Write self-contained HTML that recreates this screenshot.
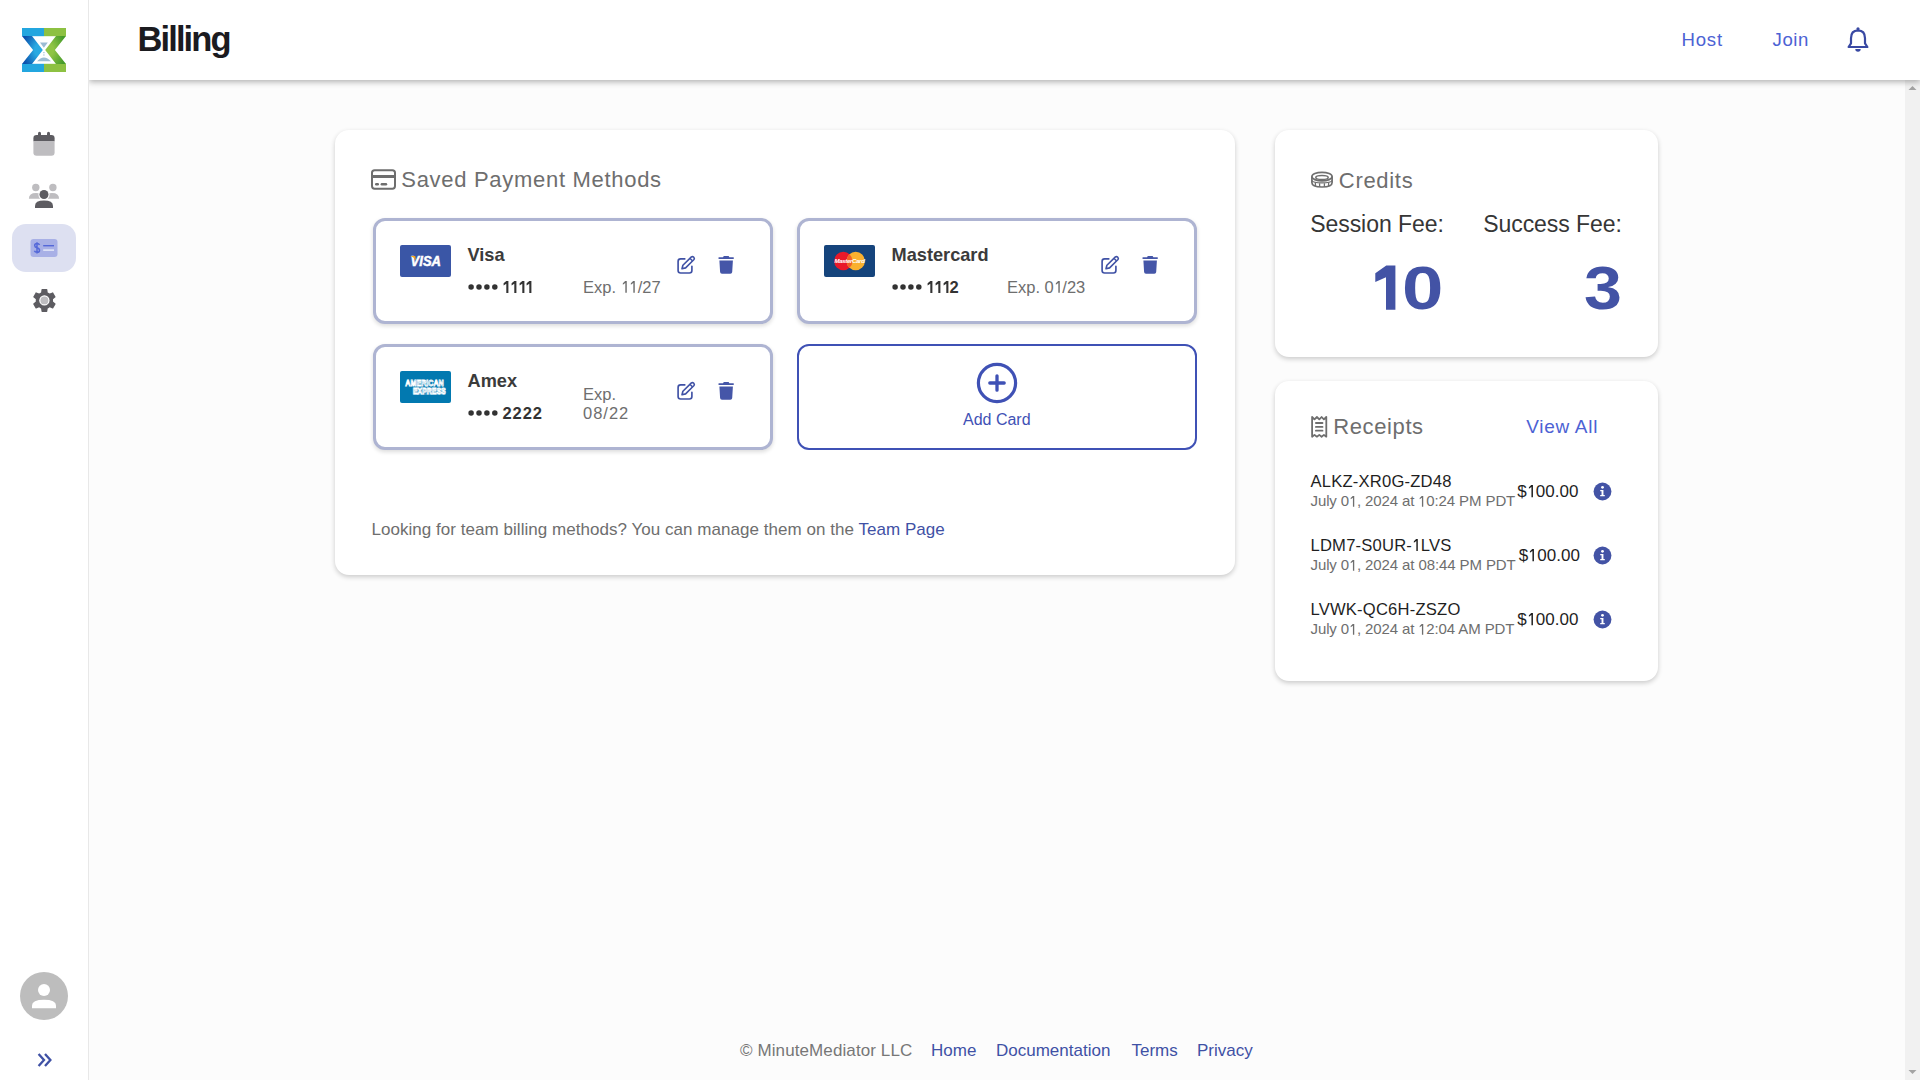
<!DOCTYPE html>
<html><head><meta charset="utf-8">
<style>
*{margin:0;padding:0;box-sizing:border-box}
html,body{width:1920px;height:1080px;overflow:hidden;background:#fcfcfc;font-family:"Liberation Sans",sans-serif}
.a{position:absolute;white-space:nowrap;line-height:1}
#side{position:absolute;left:0;top:0;width:89px;height:1080px;background:#fff;border-right:1px solid #e8e8e8}
#head{position:absolute;left:89px;top:0;width:1831px;height:80px;background:#fff;box-shadow:0 2px 6px rgba(0,0,0,.3);clip-path:inset(0 0 -30px 0);z-index:2}
#sb{position:absolute;left:1905px;top:80px;width:15px;height:1000px;background:#f1f1f1}
.card{position:absolute;background:#fff;border-radius:14px;box-shadow:0 2px 5px rgba(0,0,0,.2)}
.o1{display:inline-block;position:relative;width:.52em;height:.716em;vertical-align:baseline}
.o1 svg{position:absolute;left:0;top:0;width:100%;height:100%;overflow:visible}
.pm{position:absolute;width:400px;height:106px;border:3px solid #aeb4d2;border-radius:12px;background:#fff;box-shadow:0 2px 4px rgba(0,0,0,.14)}
</style></head><body>
<div id="side">
<svg class="a" style="left:22px;top:28px" width="44" height="44" viewBox="0 0 44 44">
<defs>
<radialGradient id="gb" cx="0.8" cy="0.5" r="0.8"><stop offset="0.25" stop-color="#29a9e1"/><stop offset="1" stop-color="#0a4fab"/></radialGradient>
<radialGradient id="gg" cx="0.2" cy="0.5" r="0.8"><stop offset="0.25" stop-color="#8fc445"/><stop offset="1" stop-color="#459b2a"/></radialGradient>
</defs>
<rect x="0" y="0" width="22" height="8.2" fill="#23a6df"/><rect x="22" y="0" width="22" height="8.2" fill="#8dc142"/>
<rect x="0" y="35.8" width="22" height="8.2" fill="#23a6df"/><rect x="22" y="35.8" width="22" height="8.2" fill="#8dc142"/>
<polygon points="0,8 10,8 20.8,22 10,36 0,36 11.1,22" fill="url(#gb)"/>
<polygon points="44,8 34,8 23.2,22 34,36 44,36 32.9,22" fill="url(#gg)"/>
<polygon points="18,14.6 25.8,14.6 21.9,19.8" fill="#9bbcd3"/>
<path d="M15 33.3 Q21.9 25.6 29 33.3 Z" fill="#9bbcd3"/>
<rect x="21.3" y="24" width="1.2" height="1.2" fill="#9bbcd3"/><rect x="21.3" y="26.4" width="1.2" height="1.2" fill="#9bbcd3"/>
</svg>
<svg class="a" style="left:33px;top:131px" width="22" height="26" viewBox="0 0 22 26">
<rect x="5" y="0.8" width="3" height="6" rx="1.5" fill="#5d5c61"/><rect x="14" y="0.8" width="3" height="6" rx="1.5" fill="#5d5c61"/>
<path d="M0.4 7.2 Q0.4 4 3.6 4 H18.4 Q21.6 4 21.6 7.2 V10.2 H0.4 Z" fill="#5d5c61"/>
<path d="M0.4 10.1 H21.6 V21.6 Q21.6 24.8 18.4 24.8 H3.6 Q0.4 24.8 0.4 21.6 Z" fill="#bebdc0"/>
</svg>
<svg class="a" style="left:28px;top:182px" width="32" height="28" viewBox="0 0 32 28">
<circle cx="7.8" cy="5.5" r="3.7" fill="#bebdc0"/><circle cx="24.9" cy="5.5" r="3.7" fill="#bebdc0"/>
<path d="M0.9 16.8 Q0.9 11 8 11 Q11 11 12.5 12 Q11.2 14 12 16.8 Z" fill="#bebdc0"/>
<path d="M31.1 16.8 Q31.1 11 24 11 Q21 11 19.5 12 Q20.8 14 20 16.8 Z" fill="#bebdc0"/>
<circle cx="16" cy="12.5" r="5.6" fill="#fff"/>
<circle cx="16" cy="12.5" r="4.5" fill="#5d5c61"/>
<path d="M7 26 V24 Q7 18.6 16 18.6 Q25 18.6 25 24 V26 Z" fill="#5d5c61"/>
</svg>
<div class="a" style="left:12px;top:224px;width:64px;height:48px;border-radius:14px;background:#dde0f1"></div>
<svg class="a" style="left:30px;top:239px" width="28" height="18" viewBox="0 0 28 18">
<rect x="0.5" y="0" width="27" height="18" rx="3" fill="#a8b0e6"/>
<path d="M9.5 5.9 Q9 4.5 7 4.5 Q4.7 4.5 4.7 6.6 Q4.7 8.3 7 8.8 Q9.5 9.3 9.5 11.4 Q9.5 13.3 7 13.3 Q4.9 13.3 4.4 11.8 M7 3.2 V14.6" fill="none" stroke="#5468d8" stroke-width="1.5"/>
<rect x="13.2" y="6" width="10.8" height="1.4" fill="#5468d8"/>
<rect x="13.2" y="10.4" width="10.8" height="1.4" fill="#e8ebfa"/>
</svg>
<svg class="a" style="left:29.6px;top:285.5px" width="28.8" height="28.8" viewBox="0 0 24 24">
<path fill="#5d5c61" d="M19.14 12.94c.04-.3.06-.61.06-.94 0-.32-.02-.64-.07-.94l2.03-1.58c.18-.14.23-.41.12-.61l-1.92-3.32c-.12-.22-.37-.29-.59-.22l-2.39.96c-.5-.38-1.03-.7-1.62-.94l-.36-2.54c-.04-.24-.24-.41-.48-.41h-3.84c-.24 0-.43.17-.47.41l-.36 2.54c-.59.24-1.13.57-1.62.94l-2.39-.96c-.22-.08-.47 0-.59.22L2.74 8.87c-.12.21-.08.47.12.61l2.03 1.58c-.05.3-.09.63-.09.94s.02.64.07.94l-2.03 1.58c-.18.14-.23.41-.12.61l1.920 3.32c.12.22.37.29.59.22l2.39-.96c.5.38 1.03.7 1.62.94l.36 2.54c.05.24.24.41.48.41h3.84c.24 0 .44-.17.47-.41l.36-2.54c.59-.24 1.13-.56 1.62-.94l2.39.96c.22.08.47 0 .59-.22l1.92-3.32c.12-.22.07-.47-.12-.61l-2.01-1.58z"/>
<circle cx="12" cy="12" r="4.3" fill="#fff"/><circle cx="12" cy="12" r="3.3" fill="#bebdc0"/>
</svg>
<svg class="a" style="left:20px;top:972px" width="48" height="48" viewBox="0 0 48 48">
<circle cx="24" cy="24" r="24" fill="#bdbdbd"/>
<circle cx="24" cy="18" r="6" fill="#fff"/>
<path d="M12 36.2 V33.5 Q12 27.8 24 27.8 Q36 27.8 36 33.5 V36.2 Z" fill="#fff"/>
</svg>
<svg class="a" style="left:36px;top:1051px" width="18" height="18" viewBox="0 0 18 18">
<path d="M2.6 3 L8 9 L2.6 15 M9 3 L14.4 9 L9 15" fill="none" stroke="#3f51a5" stroke-width="2.3"/>
</svg>
</div>
<div id="head">
<div class="a" style="left:48.5px;top:21.6px;font-size:34.5px;font-weight:bold;letter-spacing:-1.9px;color:#1b1b1f">Billing</div>
<div class="a" style="left:1592.5px;top:30.9px;font-size:18.6px;letter-spacing:0.8px;color:#4c62d4">Host</div>
<div class="a" style="left:1683.5px;top:30.9px;font-size:18.6px;letter-spacing:0.6px;color:#4c62d4">Join</div>
<svg class="a" style="left:1757px;top:26px" width="24" height="27" viewBox="0 0 24 27">
<circle cx="12" cy="2.8" r="1.6" fill="#3949a3"/>
<path d="M2.6 21 L5 17.3 V12.2 Q5 4.6 12 4.4 Q19 4.6 19 12.2 V17.3 L21.4 21 Z" fill="none" stroke="#3949a3" stroke-width="2.2" stroke-linejoin="round"/>
<path d="M9.3 23 H14.7 Q14.7 25.8 12 25.8 Q9.3 25.8 9.3 23 Z" fill="#3949a3"/>
</svg>
</div>
<div id="sb"></div>
<svg class="a" style="left:1905px;top:80px" width="15" height="15"><path d="M3.5 10 L7.5 6 L11.5 10 Z" fill="#a3a3a3"/></svg>
<svg class="a" style="left:1905px;top:1065px" width="15" height="15"><path d="M3.5 5 L7.5 9 L11.5 5 Z" fill="#a3a3a3"/></svg>
<div class="card" style="left:335px;top:130px;width:900px;height:445px"></div>
<svg class="a" style="left:370px;top:168px" width="27" height="23" viewBox="0 0 27 23"><rect x="2" y="2.2" width="23" height="18.5" rx="2.6" fill="none" stroke="#6e6e6e" stroke-width="2"/><rect x="2" y="7" width="23" height="3" fill="#6e6e6e"/><rect x="5" y="15" width="4" height="2.4" rx="1.2" fill="#6e6e6e"/><rect x="10.6" y="15" width="6.6" height="2.4" rx="1.2" fill="#6e6e6e"/></svg>
<div class="a" style="left:401.3px;top:169.4px;font-size:22.0px;color:#6e6e6e;letter-spacing:0.7px">Saved Payment Methods</div>
<div class="pm" style="left:373px;top:218px"></div>
<svg class="a" style="left:400px;top:245px" width="51" height="32" viewBox="0 0 51 32"><rect width="51" height="32" rx="2" fill="#3a56a6"/><text x="10.6" y="21.2" textLength="30.4" lengthAdjust="spacingAndGlyphs" font-family="Liberation Sans" font-size="14" font-weight="bold" font-style="italic" fill="#fff" stroke="#fff" stroke-width="0.5">VISA</text><path d="M10.2 11 L15.2 11 L16 15.6 Q13.8 11.8 10.2 11 Z" fill="#f4a51c"/></svg>
<div class="a" style="left:467.5px;top:246.4px;font-size:18.2px;color:#3b3b3b;font-weight:bold">Visa</div>
<svg class="a" style="left:468.0px;top:283.4px" width="32" height="8" viewBox="0 0 32 8"><circle cx="3.10" cy="4" r="2.75" fill="#333"/><circle cx="11.00" cy="4" r="2.75" fill="#333"/><circle cx="18.90" cy="4" r="2.75" fill="#333"/><circle cx="26.80" cy="4" r="2.75" fill="#333"/></svg>
<svg class="a" style="left:503.4px;top:281.0px" width="7" height="12" viewBox="0 0 7 12"><path d="M3.3 0 H5.4 V12 H3.3 V2.7 L0.6 4.4 V2.3 Z" fill="#333"/></svg>
<svg class="a" style="left:510.9px;top:281.0px" width="7" height="12" viewBox="0 0 7 12"><path d="M3.3 0 H5.4 V12 H3.3 V2.7 L0.6 4.4 V2.3 Z" fill="#333"/></svg>
<svg class="a" style="left:518.5px;top:281.0px" width="7" height="12" viewBox="0 0 7 12"><path d="M3.3 0 H5.4 V12 H3.3 V2.7 L0.6 4.4 V2.3 Z" fill="#333"/></svg>
<svg class="a" style="left:526.0px;top:281.0px" width="7" height="12" viewBox="0 0 7 12"><path d="M3.3 0 H5.4 V12 H3.3 V2.7 L0.6 4.4 V2.3 Z" fill="#333"/></svg>
<div class="a" style="left:583.0px;top:279.0px;font-size:16.5px;color:#6e6e6e;">Exp. <span class="o1"><svg viewBox="0 0 520 716" preserveAspectRatio="none"><path d="M262 0 H350 V716 H262 V118 L112 222 V132 L250 0 Z" fill="currentColor"/></svg></span><span class="o1"><svg viewBox="0 0 520 716" preserveAspectRatio="none"><path d="M262 0 H350 V716 H262 V118 L112 222 V132 L250 0 Z" fill="currentColor"/></svg></span>/27</div>
<svg class="a" style="left:675.0px;top:255.0px" width="21" height="21" viewBox="0 0 21 21"><path d="M9.8 3.9 H5.6 Q3.1 3.9 3.1 6.4 V15.45 Q3.1 17.95 5.6 17.95 H14.4 Q16.9 17.95 16.9 15.45 V11.25" fill="none" stroke="#3f51a5" stroke-width="1.65" stroke-linecap="round"/><path d="M16.4 1.9 Q17.6 1.1 18.8 2.3 Q19.8 3.5 19 4.5 L10.6 12.9 L7 13.8 L7.9 10.2 Z" fill="none" stroke="#3f51a5" stroke-width="1.6" stroke-linejoin="round"/><path d="M15.1 3.4 L17.4 5.7" stroke="#3f51a5" stroke-width="1.4"/></svg>
<svg class="a" style="left:717.0px;top:255.0px" width="18" height="20" viewBox="0 0 18 20"><path d="M6.8 1 H11.6 L12.4 2.2 H16 Q17 2.2 17 3.1 Q17 4 16 4 H2.3 Q1.3 4 1.3 3.1 Q1.3 2.2 2.3 2.2 H6 Z" fill="#4556a8"/><path d="M2.4 5.6 H15.9 L15.2 17 Q15.1 18.8 13.3 18.8 H5 Q3.2 18.8 3.1 17 Z" fill="#4556a8"/></svg>
<div class="pm" style="left:797px;top:218px"></div>
<svg class="a" style="left:824px;top:245px" width="51" height="32" viewBox="0 0 51 32"><rect width="51" height="32" rx="2" fill="#15447c"/><circle cx="19.3" cy="16" r="9.2" fill="#e9192a"/><circle cx="31.7" cy="16" r="9.2" fill="#f9b12f"/><path d="M25.5 9.2 A9.2 9.2 0 0 1 25.5 22.8 A9.2 9.2 0 0 1 25.5 9.2 Z" fill="#f16026"/><text x="25.5" y="18.2" text-anchor="middle" font-family="Liberation Sans" font-size="6.2" font-weight="bold" font-style="italic" fill="#fff" letter-spacing="-0.4">MasterCard</text></svg>
<div class="a" style="left:891.5px;top:246.4px;font-size:18.2px;color:#3b3b3b;font-weight:bold">Mastercard</div>
<svg class="a" style="left:892.0px;top:283.4px" width="32" height="8" viewBox="0 0 32 8"><circle cx="3.10" cy="4" r="2.75" fill="#333"/><circle cx="11.00" cy="4" r="2.75" fill="#333"/><circle cx="18.90" cy="4" r="2.75" fill="#333"/><circle cx="26.80" cy="4" r="2.75" fill="#333"/></svg>
<svg class="a" style="left:927.4px;top:281.0px" width="7" height="12" viewBox="0 0 7 12"><path d="M3.3 0 H5.4 V12 H3.3 V2.7 L0.6 4.4 V2.3 Z" fill="#333"/></svg>
<svg class="a" style="left:934.9px;top:281.0px" width="7" height="12" viewBox="0 0 7 12"><path d="M3.3 0 H5.4 V12 H3.3 V2.7 L0.6 4.4 V2.3 Z" fill="#333"/></svg>
<svg class="a" style="left:942.5px;top:281.0px" width="7" height="12" viewBox="0 0 7 12"><path d="M3.3 0 H5.4 V12 H3.3 V2.7 L0.6 4.4 V2.3 Z" fill="#333"/></svg>
<div class="a" style="left:949.6px;top:279.0px;font-size:16.5px;color:#333;font-weight:bold">2</div>
<div class="a" style="left:1007.0px;top:279.0px;font-size:16.5px;color:#6e6e6e;">Exp. 0<span class="o1"><svg viewBox="0 0 520 716" preserveAspectRatio="none"><path d="M262 0 H350 V716 H262 V118 L112 222 V132 L250 0 Z" fill="currentColor"/></svg></span>/23</div>
<svg class="a" style="left:1099.0px;top:255.0px" width="21" height="21" viewBox="0 0 21 21"><path d="M9.8 3.9 H5.6 Q3.1 3.9 3.1 6.4 V15.45 Q3.1 17.95 5.6 17.95 H14.4 Q16.9 17.95 16.9 15.45 V11.25" fill="none" stroke="#3f51a5" stroke-width="1.65" stroke-linecap="round"/><path d="M16.4 1.9 Q17.6 1.1 18.8 2.3 Q19.8 3.5 19 4.5 L10.6 12.9 L7 13.8 L7.9 10.2 Z" fill="none" stroke="#3f51a5" stroke-width="1.6" stroke-linejoin="round"/><path d="M15.1 3.4 L17.4 5.7" stroke="#3f51a5" stroke-width="1.4"/></svg>
<svg class="a" style="left:1141.0px;top:255.0px" width="18" height="20" viewBox="0 0 18 20"><path d="M6.8 1 H11.6 L12.4 2.2 H16 Q17 2.2 17 3.1 Q17 4 16 4 H2.3 Q1.3 4 1.3 3.1 Q1.3 2.2 2.3 2.2 H6 Z" fill="#4556a8"/><path d="M2.4 5.6 H15.9 L15.2 17 Q15.1 18.8 13.3 18.8 H5 Q3.2 18.8 3.1 17 Z" fill="#4556a8"/></svg>
<div class="pm" style="left:373px;top:344px"></div>
<svg class="a" style="left:400px;top:371px" width="51" height="32" viewBox="0 0 51 32"><rect width="51" height="32" rx="2" fill="#0279b0"/><rect x="12.6" y="16.4" width="33.4" height="7.6" rx="1" fill="#3d97c4"/><text x="5.3" y="14.9" textLength="38.4" lengthAdjust="spacingAndGlyphs" font-family="Liberation Sans" font-size="9" font-weight="bold" fill="#0279b0" stroke="#fff" stroke-width="0.9">AMERICAN</text><text x="13" y="23.4" textLength="32.6" lengthAdjust="spacingAndGlyphs" font-family="Liberation Sans" font-size="9" font-weight="bold" fill="#3d97c4" stroke="#fff" stroke-width="0.9">EXPRESS</text></svg>
<div class="a" style="left:467.5px;top:372.4px;font-size:18.2px;color:#3b3b3b;font-weight:bold">Amex</div>
<svg class="a" style="left:468.0px;top:409.4px" width="32" height="8" viewBox="0 0 32 8"><circle cx="3.10" cy="4" r="2.75" fill="#333"/><circle cx="11.00" cy="4" r="2.75" fill="#333"/><circle cx="18.90" cy="4" r="2.75" fill="#333"/><circle cx="26.80" cy="4" r="2.75" fill="#333"/></svg>
<div class="a" style="left:502.5px;top:405.0px;font-size:16.5px;color:#333;font-weight:bold;letter-spacing:0.9px">2222</div>
<div class="a" style="left:583.0px;top:385.5px;font-size:16.5px;color:#6e6e6e;">Exp.</div>
<div class="a" style="left:583.0px;top:405.0px;font-size:16.5px;color:#6e6e6e;letter-spacing:1px">08/22</div>
<svg class="a" style="left:675.0px;top:381.0px" width="21" height="21" viewBox="0 0 21 21"><path d="M9.8 3.9 H5.6 Q3.1 3.9 3.1 6.4 V15.45 Q3.1 17.95 5.6 17.95 H14.4 Q16.9 17.95 16.9 15.45 V11.25" fill="none" stroke="#3f51a5" stroke-width="1.65" stroke-linecap="round"/><path d="M16.4 1.9 Q17.6 1.1 18.8 2.3 Q19.8 3.5 19 4.5 L10.6 12.9 L7 13.8 L7.9 10.2 Z" fill="none" stroke="#3f51a5" stroke-width="1.6" stroke-linejoin="round"/><path d="M15.1 3.4 L17.4 5.7" stroke="#3f51a5" stroke-width="1.4"/></svg>
<svg class="a" style="left:717.0px;top:381.0px" width="18" height="20" viewBox="0 0 18 20"><path d="M6.8 1 H11.6 L12.4 2.2 H16 Q17 2.2 17 3.1 Q17 4 16 4 H2.3 Q1.3 4 1.3 3.1 Q1.3 2.2 2.3 2.2 H6 Z" fill="#4556a8"/><path d="M2.4 5.6 H15.9 L15.2 17 Q15.1 18.8 13.3 18.8 H5 Q3.2 18.8 3.1 17 Z" fill="#4556a8"/></svg>
<div class="a" style="left:797px;top:344px;width:400px;height:106px;border:2px solid #3f51b5;border-radius:12px;background:#fff"></div>
<svg class="a" style="left:975px;top:361px" width="44" height="44" viewBox="0 0 44 44"><circle cx="22" cy="22" r="18.6" fill="none" stroke="#3f51b5" stroke-width="3.2"/><path d="M22 14.8 V29.2 M14.8 22 H29.2" stroke="#3f51b5" stroke-width="3.3" stroke-linecap="round"/></svg>
<div class="a" style="left:963.0px;top:411.6px;font-size:16.0px;color:#3f51b5;">Add Card</div>
<div class="a" style="left:371.5px;top:520.9px;font-size:17.0px;color:#6e6e6e;letter-spacing:0.04px">Looking for team billing methods? You can manage them on the <span style="color:#3f51a5">Team Page</span></div>
<div class="card" style="left:1275px;top:130px;width:383px;height:227px"></div>
<svg class="a" style="left:1310px;top:170px" width="24" height="20" viewBox="0 0 24 20"><ellipse cx="12" cy="6.6" rx="10.1" ry="4.3" fill="none" stroke="#6e6e6e" stroke-width="1.7"/><ellipse cx="12" cy="7.6" rx="6.2" ry="2" fill="none" stroke="#6e6e6e" stroke-width="1.5"/><path d="M1.9 6.6 V12.4 Q1.9 17 12 17 Q22.1 17 22.1 12.4 V6.6" fill="none" stroke="#6e6e6e" stroke-width="1.7"/><path d="M5.4 12.6 V16 M9.6 13.2 V16.8 M14.4 13.2 V16.8 M18.6 12.6 V16" stroke="#6e6e6e" stroke-width="1.3"/><path d="M1.9 10.4 Q3 12.8 12 12.8 Q21 12.8 22.1 10.4" fill="none" stroke="#6e6e6e" stroke-width="1.2"/></svg>
<div class="a" style="left:1338.8px;top:169.6px;font-size:22.0px;color:#6e6e6e;letter-spacing:0.7px">Credits</div>
<div class="a" style="left:1310.2px;top:213.1px;font-size:23.0px;color:#363636;letter-spacing:-0.05px">Session Fee:</div>
<div class="a" style="left:1483.2px;top:213.1px;font-size:23.0px;color:#363636;letter-spacing:-0.05px">Success Fee:</div>
<svg class="a" style="left:1370px;top:260px" width="30" height="55" viewBox="1370 260 30 55"><path d="M1386.3 265.5 H1395.4 V309.8 H1386 V277.2 L1375.3 282 V273.2 Z" fill="#4353a5"/></svg>
<div class="a" style="left:1402.2px;top:257.3px;font-size:62.0px;color:#4353a5;font-weight:bold;transform:scaleX(1.2);transform-origin:0 0">0</div>
<div class="a" style="left:1583.5px;top:257.3px;font-size:62.0px;color:#4353a5;font-weight:bold;transform:scaleX(1.1);transform-origin:0 0">3</div>
<div class="card" style="left:1275px;top:381px;width:383px;height:300px"></div>
<svg class="a" style="left:1309px;top:414px" width="21" height="26" viewBox="0 0 21 26"><path d="M3.1 3 L5.5 5.4 L7.9 3 L10.3 5.4 L12.6 3 L14.9 5.4 L17.3 3 V22.7 L14.9 20.9 L12.6 22.7 L10.3 20.9 L7.9 22.7 L5.5 20.9 L3.1 22.7 Z" fill="none" stroke="#6e6e6e" stroke-width="1.8" stroke-linejoin="round"/><path d="M6.9 9 H13.5 M6.9 12.9 H13.5 M6.9 16.7 H13.5" stroke="#6e6e6e" stroke-width="1.8" stroke-linecap="round"/></svg>
<div class="a" style="left:1333.3px;top:416.4px;font-size:22.0px;color:#6e6e6e;letter-spacing:0.6px">Receipts</div>
<div class="a" style="left:1526.3px;top:416.8px;font-size:19.0px;color:#4c62d4;letter-spacing:0.7px">View All</div>
<div class="a" style="left:1310.5px;top:473.9px;font-size:16.6px;color:#1f1f1f;letter-spacing:0.2px">ALKZ-XR0G-ZD48</div>
<div class="a" style="left:1310.5px;top:493.3px;font-size:15.0px;color:#6e6e6e;letter-spacing:-0.1px">July 0<span class="o1"><svg viewBox="0 0 520 716" preserveAspectRatio="none"><path d="M262 0 H350 V716 H262 V118 L112 222 V132 L250 0 Z" fill="currentColor"/></svg></span>, 2024 at <span class="o1"><svg viewBox="0 0 520 716" preserveAspectRatio="none"><path d="M262 0 H350 V716 H262 V118 L112 222 V132 L250 0 Z" fill="currentColor"/></svg></span>0:24 PM PDT</div>
<div class="a" style="left:1517.3px;top:482.7px;font-size:17.0px;color:#1f1f1f;letter-spacing:0.05px">$<span class="o1"><svg viewBox="0 0 520 716" preserveAspectRatio="none"><path d="M262 0 H350 V716 H262 V118 L112 222 V132 L250 0 Z" fill="currentColor"/></svg></span>00.00</div>
<svg class="a" style="left:1592.6px;top:481.6px" width="19" height="19" viewBox="0 0 20 20"><circle cx="10" cy="10" r="9.4" fill="#4353a5"/><circle cx="10" cy="5.6" r="1.5" fill="#fff"/><path d="M7.6 8.4 H11 V13.6 H12.4 V15 H7.6 V13.6 H9 V9.8 H7.6 Z" fill="#fff"/></svg>
<div class="a" style="left:1310.5px;top:537.9px;font-size:16.6px;color:#1f1f1f;letter-spacing:0.2px">LDM7-S0UR-<span class="o1"><svg viewBox="0 0 520 716" preserveAspectRatio="none"><path d="M262 0 H350 V716 H262 V118 L112 222 V132 L250 0 Z" fill="currentColor"/></svg></span>LVS</div>
<div class="a" style="left:1310.5px;top:557.3px;font-size:15.0px;color:#6e6e6e;letter-spacing:-0.1px">July 0<span class="o1"><svg viewBox="0 0 520 716" preserveAspectRatio="none"><path d="M262 0 H350 V716 H262 V118 L112 222 V132 L250 0 Z" fill="currentColor"/></svg></span>, 2024 at 08:44 PM PDT</div>
<div class="a" style="left:1518.8px;top:546.7px;font-size:17.0px;color:#1f1f1f;letter-spacing:0.05px">$<span class="o1"><svg viewBox="0 0 520 716" preserveAspectRatio="none"><path d="M262 0 H350 V716 H262 V118 L112 222 V132 L250 0 Z" fill="currentColor"/></svg></span>00.00</div>
<svg class="a" style="left:1592.6px;top:545.6px" width="19" height="19" viewBox="0 0 20 20"><circle cx="10" cy="10" r="9.4" fill="#4353a5"/><circle cx="10" cy="5.6" r="1.5" fill="#fff"/><path d="M7.6 8.4 H11 V13.6 H12.4 V15 H7.6 V13.6 H9 V9.8 H7.6 Z" fill="#fff"/></svg>
<div class="a" style="left:1310.5px;top:601.9px;font-size:16.6px;color:#1f1f1f;letter-spacing:0.2px">LVWK-QC6H-ZSZO</div>
<div class="a" style="left:1310.5px;top:621.3px;font-size:15.0px;color:#6e6e6e;letter-spacing:-0.1px">July 0<span class="o1"><svg viewBox="0 0 520 716" preserveAspectRatio="none"><path d="M262 0 H350 V716 H262 V118 L112 222 V132 L250 0 Z" fill="currentColor"/></svg></span>, 2024 at <span class="o1"><svg viewBox="0 0 520 716" preserveAspectRatio="none"><path d="M262 0 H350 V716 H262 V118 L112 222 V132 L250 0 Z" fill="currentColor"/></svg></span>2:04 AM PDT</div>
<div class="a" style="left:1517.3px;top:610.7px;font-size:17.0px;color:#1f1f1f;letter-spacing:0.05px">$<span class="o1"><svg viewBox="0 0 520 716" preserveAspectRatio="none"><path d="M262 0 H350 V716 H262 V118 L112 222 V132 L250 0 Z" fill="currentColor"/></svg></span>00.00</div>
<svg class="a" style="left:1592.6px;top:609.6px" width="19" height="19" viewBox="0 0 20 20"><circle cx="10" cy="10" r="9.4" fill="#4353a5"/><circle cx="10" cy="5.6" r="1.5" fill="#fff"/><path d="M7.6 8.4 H11 V13.6 H12.4 V15 H7.6 V13.6 H9 V9.8 H7.6 Z" fill="#fff"/></svg>
<div class="a" style="left:740.0px;top:1042.0px;font-size:17.0px;color:#777;letter-spacing:0.1px">&#169; MinuteMediator LLC</div>
<div class="a" style="left:931.0px;top:1042.0px;font-size:17.0px;color:#3f51a5;">Home</div>
<div class="a" style="left:996.0px;top:1042.0px;font-size:17.0px;color:#3f51a5;">Documentation</div>
<div class="a" style="left:1131.5px;top:1042.0px;font-size:17.0px;color:#3f51a5;">Terms</div>
<div class="a" style="left:1197.0px;top:1042.0px;font-size:17.0px;color:#3f51a5;">Privacy</div>
</body></html>
